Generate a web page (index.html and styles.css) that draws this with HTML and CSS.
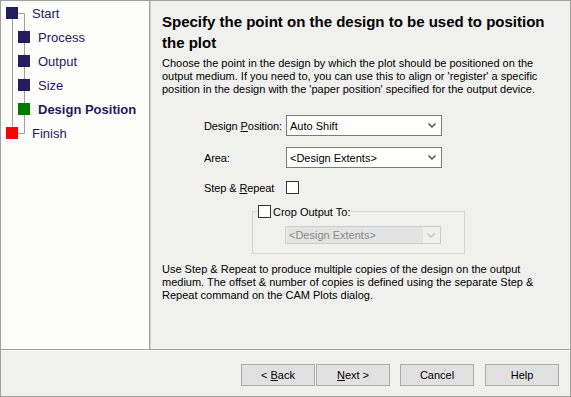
FILE: index.html
```html
<!DOCTYPE html>
<html lang="en">
  <head>
    <meta charset="UTF-8" />
    <title>CAM Plot Wizard</title>
    <link rel="stylesheet" href="styles.css">
  </head>
  <body>
    <div class="wizard">
      <div class="main">
        <!-- step tree on the left -->
        <div class="steps">
          <svg class="tree-lines" width="40" height="150">
            <path d="M12.5 19 V127 M18 13.5 H24.5 V133.5 H18" stroke="#a0a0a0" stroke-width="1" fill="none" />
          </svg>
          <div class="step top"><span class="box done"></span>Start</div>
          <div class="step sub"><span class="box done"></span>Process</div>
          <div class="step sub"><span class="box done"></span>Output</div>
          <div class="step sub"><span class="box done"></span>Size</div>
          <div class="step sub current"><span class="box now"></span>Design Position</div>
          <div class="step top"><span class="box end"></span>Finish</div>
        </div>

        <div class="page">
          <h1>Specify the point on the design to be used to position the plot</h1>
          <p class="intro">
            Choose the point in the design by which the plot should be positioned on the
            output medium. If you need to, you can use this to align or 'register' a specific
            position in the design with the 'paper position' specified for the output device.
          </p>

          <div class="row">
            <label>Design <u>P</u>osition:</label>
            <div class="combo">
              <span>Auto Shift</span>
              <svg width="8" height="5"><path d="M0.5 0.5 L4 4 L7.5 0.5" stroke="#4a4a4a" stroke-width="1.4" fill="none" /></svg>
            </div>
          </div>
          <div class="row">
            <label>Area:</label>
            <div class="combo">
              <span>&lt;Design Extents&gt;</span>
              <svg width="8" height="5"><path d="M0.5 0.5 L4 4 L7.5 0.5" stroke="#4a4a4a" stroke-width="1.4" fill="none" /></svg>
            </div>
          </div>
          <div class="row check-row">
            <label>Step &amp; <u>R</u>epeat</label>
            <span class="check"></span>
          </div>

          <fieldset class="crop">
            <legend><span class="check"></span>Crop Output To:</legend>
            <div class="combo disabled">
              <span>&lt;Design Extents&gt;</span>
              <svg width="8" height="5"><path d="M0.5 0.5 L4 4 L7.5 0.5" stroke="#c4c4c4" stroke-width="1.4" fill="none" /></svg>
            </div>
          </fieldset>

          <p class="note">
            Use Step &amp; Repeat to produce multiple copies of the design on the output
            medium. The offset &amp; number of copies is defined using the separate Step &amp;
            Repeat command on the CAM Plots dialog.
          </p>
        </div>
      </div>

      <div class="footer">
        <button>&lt; <u>B</u>ack</button>
        <button class="next"><u>N</u>ext &gt;</button>
        <button class="cancel">Cancel</button>
        <button class="help">Help</button>
      </div>
    </div>
  </body>
</html>
```

FILE: styles.css
```css
body {
  margin: 0;
  font-family: "Liberation Sans", Arial, sans-serif;
  font-size: 11px;
  color: #000;
}
.wizard {
  width: 571px;
  height: 397px;
  box-sizing: border-box;
  border: 1px solid #a0a0a0;
  background-color: #f0f0ee;
  display: flex;
  flex-direction: column;
}
.main {
  height: 348px;
  display: flex;
}

/* left step list */
.steps {
  position: relative;
  width: 148px;
  background-color: #fdfdfb;
  border-right: 1px solid #a0a0a0;
  box-shadow: 1px 0 0 #cfd0d8;
  font-size: 13px;
}
.tree-lines {
  position: absolute;
  left: -1px;
  top: -1px;
}
.step {
  position: relative;
  height: 24px;
  display: flex;
  align-items: center;
  color: #1f1a5c;
}
.step.top {
  padding-left: 5px;
}
.step.top .box {
  margin-right: 14px;
}
.step.sub {
  padding-left: 17px;
}
.step.sub .box {
  margin-right: 8px;
}
.step.current {
  font-weight: bold;
}
.box {
  width: 12px;
  height: 12px;
}
.box.done {
  background-color: #221d5c;
}
.box.now {
  background-color: #007a00;
}
.box.end {
  background-color: #ff0000;
}

/* right page */
.page {
  flex: 1;
  margin-left: 1px;
  padding: 10px 9px 0 11px;
}
h1 {
  margin: 0;
  font-size: 15px;
  line-height: 21px;
  font-weight: bold;
}
.intro {
  margin: 4px 0 0;
  line-height: 13px;
}
.row {
  display: flex;
  align-items: center;
  margin-left: 42px;
  height: 21px;
  margin-top: 11px;
}
.intro + .row {
  margin-top: 19px;
}
.row label {
  width: 82px;
  letter-spacing: -0.1px;
}
.check-row {
  margin-top: 9px;
}
.combo {
  width: 156px;
  height: 21px;
  box-sizing: border-box;
  border: 1px solid #7a7a7a;
  background-color: #fff;
  display: flex;
  align-items: center;
  justify-content: space-between;
  padding: 0 5px 0 3px;
}
.combo.disabled {
  height: 18px;
  border-color: #cccccc;
  background-color: #f0f0ee;
  padding: 0 5px 0 1px;
  color: #8a8a8a;
}
.combo.disabled span {
  background-color: #e3e3e3;
  width: 134px;
  height: 16px;
  line-height: 16px;
  padding-left: 2px;
}
.check {
  display: inline-block;
  width: 13px;
  height: 13px;
  box-sizing: border-box;
  border: 1px solid #333;
  background-color: #fff;
}
.crop {
  margin: 7px 0 0 90px;
  width: 213px;
  box-sizing: border-box;
  border: 1px solid #d5d5d5;
  padding: 0 0 9px 32px;
}
.crop legend {
  margin-left: -27px;
  padding: 0 1px 0 0;
  display: flex;
  align-items: center;
  gap: 2px;
  height: 13px;
}
.crop .combo {
  margin-top: 8px;
}
.note {
  margin: 9px 0 0;
  width: 380px;
  line-height: 13px;
}

/* bottom button bar */
.footer {
  flex: 1;
  border-top: 1px solid #a0a0a0;
  box-shadow: inset 0 1px 0 #fff;
  display: flex;
  justify-content: flex-end;
  align-items: flex-start;
  padding: 14px 11px 0 0;
}
button {
  width: 74px;
  height: 22px;
  background-color: #e1e1e1;
  border: 1px solid #adadad;
  font-family: "Liberation Sans", Arial, sans-serif;
  font-size: 11px;
  color: #000;
  padding: 0;
}
button.next {
  margin-left: 1px;
}
button.cancel {
  margin-left: 10px;
}
button.help {
  margin-left: 11px;
}
```
